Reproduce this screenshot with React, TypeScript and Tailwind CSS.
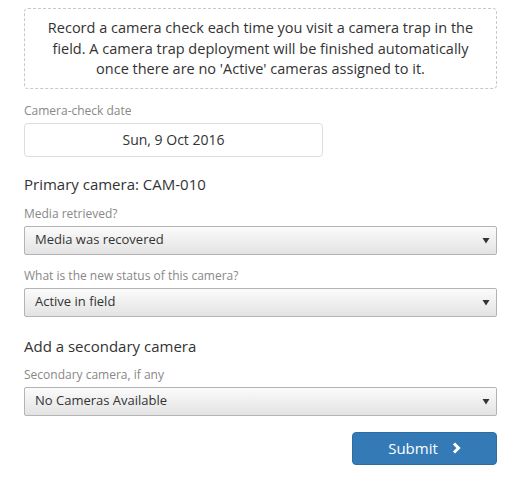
const font = { fontFamily: '"Open Sans", "Liberation Sans", sans-serif' }

function Caret() {
  return (
    <svg width="8" height="7" viewBox="0 0 8 7" className="shrink-0">
      <polygon points="0.5,1 7.5,1 4,6.5" fill="#333" />
    </svg>
  )
}

function FakeSelect({ value }: { value: string }) {
  return (
    <div className="flex h-[29px] items-center justify-between rounded-[2px] border border-[#b4b4b4] bg-gradient-to-b from-[#fbfbfb] to-[#e3e3e3] pl-[10px] pr-[6px] text-[13px] text-[#333]">
      <span>{value}</span>
      <Caret />
    </div>
  )
}

function Label({ children, className = '' }: { children: string; className?: string }) {
  return <div className={`mb-[3px] text-[12px] leading-[18px] text-[#888] ${className}`}>{children}</div>
}

export default function App() {
  return (
    <div className="min-h-[483px] w-[519px] bg-white" style={font}>
      <div className="ml-[24px] w-[473px] pt-[8px]">
        {/* info note */}
        <div className="rounded-[4px] border border-dashed border-[#c8c8c8] px-[12px] pb-[8px] pt-[9px] text-center text-[14.5px] leading-[20.5px] text-[#333]">
          Record a camera check each time you visit a camera trap in the field. A camera trap deployment will be finished automatically once there are no 'Active' cameras assigned to it.
        </div>

        <Label className="mt-[13px]">Camera-check date</Label>
        <div className="flex h-[34px] w-[299px] items-center justify-center rounded-[4px] border border-[#ddd] text-[14px] text-[#333]">
          Sun, 9 Oct 2016
        </div>

        <div className="mt-[16px] text-[15px] leading-[22px] text-[#333]">Primary camera: CAM-010</div>

        <Label className="mt-[10px]">Media retrieved?</Label>
        <FakeSelect value="Media was recovered" />

        <Label className="mt-[12px]">What is the new status of this camera?</Label>
        <FakeSelect value="Active in field" />

        <div className="mt-[18px] text-[15px] leading-[22px] text-[#333]">Add a secondary camera</div>

        <Label className="mt-[9px]">Secondary camera, if any</Label>
        <FakeSelect value="No Cameras Available" />

        <div className="mt-[16px] flex justify-end">
          <button className="flex h-[33px] w-[145px] items-center justify-center gap-[14px] rounded-[4px] border border-[#2e6da4] bg-[#337ab7] text-[15px] text-white">
            <span>Submit</span>
            <svg width="9" height="12" viewBox="0 0 9 12">
              <polyline points="2,1.5 6.5,6 2,10.5" fill="none" stroke="white" strokeWidth="3" strokeLinejoin="miter" />
            </svg>
          </button>
        </div>
      </div>
    </div>
  )
}
